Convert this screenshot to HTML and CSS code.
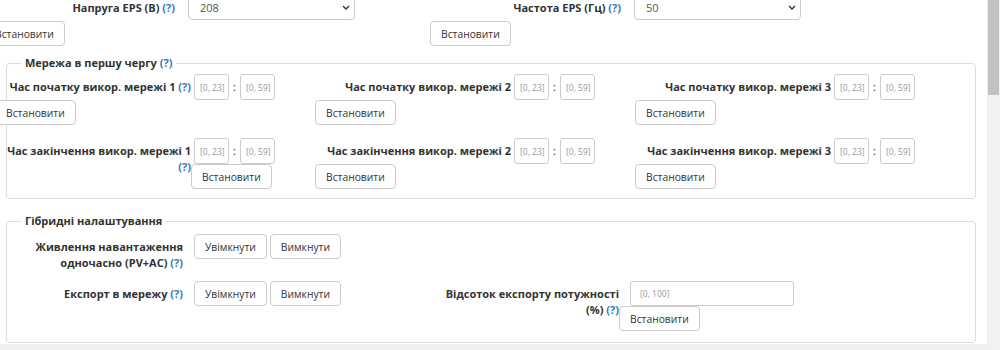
FILE: index.html
```html
<!DOCTYPE html>
<html lang="uk">
<head>
    <meta charset="UTF-8">
    <meta name="viewport" content="width=device-width, initial-scale=1.0">
    <title>Налаштування інвертора</title>
    <link rel="stylesheet" href="styles.css">
</head>
<body>
    <div class="layout">
        <div class="main">
            <div class="panel">
                <!-- EPS settings -->
                <div class="eps-row">
                    <div class="eps-field">
                        <label class="field-label">Напруга EPS (В) <a class="help">(?)</a></label>
                        <div class="select-wrap">
                            <select>
                                <option>208</option>
                                <option>220</option>
                                <option>230</option>
                                <option>240</option>
                            </select>
                            <svg width="8" height="5" viewBox="0 0 8 5"><path d="M1 1l3 3 3-3" fill="none" stroke="#333" stroke-width="1.4"/></svg>
                        </div>
                        <button class="btn btn-below">Встановити</button>
                    </div>
                    <div class="eps-field">
                        <label class="field-label">Частота EPS (Гц) <a class="help">(?)</a></label>
                        <div class="select-wrap">
                            <select>
                                <option>50</option>
                                <option>60</option>
                            </select>
                            <svg width="8" height="5" viewBox="0 0 8 5"><path d="M1 1l3 3 3-3" fill="none" stroke="#333" stroke-width="1.4"/></svg>
                        </div>
                        <button class="btn btn-below">Встановити</button>
                    </div>
                </div>

                <!-- Grid first -->
                <fieldset class="group">
                    <legend>Мережа в першу чергу <a class="help">(?)</a></legend>
                    <div class="time-grid">
                        <div class="time-field">
                            <label class="field-label">Час початку викор. мережі 1 <a class="help">(?)</a></label>
                            <div class="controls">
                                <input type="text" class="time-input" placeholder="[0, 23]">
                                <span class="colon">:</span>
                                <input type="text" class="time-input" placeholder="[0, 59]">
                            </div>
                            <button class="btn btn-below">Встановити</button>
                        </div>
                        <div class="time-field">
                            <label class="field-label">Час початку викор. мережі 2</label>
                            <div class="controls">
                                <input type="text" class="time-input" placeholder="[0, 23]">
                                <span class="colon">:</span>
                                <input type="text" class="time-input" placeholder="[0, 59]">
                            </div>
                            <button class="btn btn-below">Встановити</button>
                        </div>
                        <div class="time-field">
                            <label class="field-label">Час початку викор. мережі 3</label>
                            <div class="controls">
                                <input type="text" class="time-input" placeholder="[0, 23]">
                                <span class="colon">:</span>
                                <input type="text" class="time-input" placeholder="[0, 59]">
                            </div>
                            <button class="btn btn-below">Встановити</button>
                        </div>

                        <div class="time-field">
                            <label class="field-label label-tall">Час закінчення викор. мережі 1<br><a class="help">(?)</a></label>
                            <div class="controls">
                                <input type="text" class="time-input" placeholder="[0, 23]">
                                <span class="colon">:</span>
                                <input type="text" class="time-input" placeholder="[0, 59]">
                            </div>
                            <button class="btn btn-after">Встановити</button>
                        </div>
                        <div class="time-field">
                            <label class="field-label">Час закінчення викор. мережі 2</label>
                            <div class="controls">
                                <input type="text" class="time-input" placeholder="[0, 23]">
                                <span class="colon">:</span>
                                <input type="text" class="time-input" placeholder="[0, 59]">
                            </div>
                            <button class="btn btn-below">Встановити</button>
                        </div>
                        <div class="time-field">
                            <label class="field-label">Час закінчення викор. мережі 3</label>
                            <div class="controls">
                                <input type="text" class="time-input" placeholder="[0, 23]">
                                <span class="colon">:</span>
                                <input type="text" class="time-input" placeholder="[0, 59]">
                            </div>
                            <button class="btn btn-below">Встановити</button>
                        </div>
                    </div>
                </fieldset>

                <!-- Hybrid settings -->
                <fieldset class="group group-hybrid">
                    <legend>Гібридні налаштування</legend>
                    <div class="hybrid-grid">
                        <div class="hybrid-field">
                            <label class="field-label">Живлення навантаження<br>одночасно (PV+AC) <a class="help">(?)</a></label>
                            <div class="controls">
                                <button class="btn">Увімкнути</button>
                                <button class="btn">Вимкнути</button>
                            </div>
                        </div>
                        <div class="hybrid-field export-field">
                            <label class="field-label">Експорт в мережу <a class="help">(?)</a></label>
                            <div class="controls">
                                <button class="btn">Увімкнути</button>
                                <button class="btn">Вимкнути</button>
                            </div>
                        </div>
                        <div class="hybrid-field percent-field">
                            <label class="field-label label-tall">Відсоток експорту потужності<br>(%) <a class="help">(?)</a></label>
                            <div class="controls">
                                <input type="text" class="percent-input" placeholder="[0, 100]">
                            </div>
                            <button class="btn btn-after">Встановити</button>
                        </div>
                    </div>
                </fieldset>
            </div>
        </div>
        <div class="scrollbar">
            <div class="scrollbar-thumb"></div>
        </div>
    </div>
</body>
</html>
```

FILE: styles.css
```css
:root {
    --text-color: #333;
    --link-color: #337ab7;
    --border-color: #ccc;
    --group-border: #dcdcdc;
    --placeholder-color: #999;
    --bg-color: #f0f0f0;
}

* {
    box-sizing: border-box;
}

body {
    margin: 0;
    font-family: 'Open Sans', 'Noto Sans', sans-serif;
    font-size: 11px;
    line-height: 16px;
    color: var(--text-color);
    background-color: var(--bg-color);
    overflow: hidden;
}

.layout {
    display: flex;
    height: 350px;
}

.main {
    flex: 1;
    min-width: 0;
}

.panel {
    background: white;
    height: 344px;
    margin-right: 1px;
    overflow: hidden;
}

.scrollbar {
    width: 12px;
    background: #f1f1f1;
}

.scrollbar-thumb {
    height: 95px;
    margin-right: 1px;
    background: #c1c1c1;
}

.field-label {
    font-weight: bold;
    text-align: right;
    padding-top: 5px;
}

.help {
    color: var(--link-color);
    text-decoration: none;
}

.btn {
    height: 25px;
    padding: 0 10px;
    border: 1px solid var(--border-color);
    border-radius: 4px;
    background: white;
    font-family: inherit;
    font-size: 10.3px;
    color: var(--text-color);
    cursor: pointer;
}

.btn-below {
    grid-column: 1 / -1;
    justify-self: start;
}

.btn-after {
    grid-column: 2;
    justify-self: start;
}

/* EPS row */
.eps-row {
    display: grid;
    grid-template-columns: 446px 446px;
    margin: -5px 0 0 -16px;
}

.eps-field {
    display: grid;
    grid-template-columns: 191px 167px;
    column-gap: 13px;
    row-gap: 1px;
    align-items: start;
}

.select-wrap {
    position: relative;
    height: 25px;
}

.select-wrap select {
    width: 100%;
    height: 25px;
    appearance: none;
    border: 1px solid var(--border-color);
    border-radius: 4px;
    background: white;
    padding: 0 11px;
    font: inherit;
    color: #555;
    outline: none;
}

.select-wrap svg {
    position: absolute;
    right: 5px;
    top: 10px;
    pointer-events: none;
}

/* fieldsets */
.group {
    margin: 9px 11px 0 6px;
    padding: 3px 0 9px;
    border: 1px solid var(--group-border);
    border-radius: 4px;
    min-width: 0;
}

.group legend {
    margin-left: 14px;
    padding: 0 4px;
    font-weight: bold;
}

.group-hybrid {
    margin-top: 14px;
    padding: 5px 0 11px;
}

.time-grid {
    display: grid;
    grid-template-columns: repeat(3, 320px);
    row-gap: 13px;
    margin-left: -12px;
}

.time-field,
.hybrid-field {
    display: grid;
    grid-template-columns: 196px auto;
    justify-content: start;
    align-items: start;
}

.controls {
    display: flex;
    align-items: center;
    margin-left: 3px;
}

.label-tall {
    grid-row: 1 / span 2;
}

.time-input,
.percent-input {
    height: 26px;
    width: 35px;
    padding: 0 0 0 5px;
    border: 1px solid var(--border-color);
    border-radius: 3px;
    font-family: inherit;
    font-size: 8.5px;
    color: #555;
    outline: none;
}

.time-input::placeholder,
.percent-input::placeholder {
    color: var(--placeholder-color);
}

.colon {
    width: 11px;
    text-align: center;
}

.hybrid-grid {
    display: grid;
    grid-template-columns: 436px 436px;
    row-gap: 10px;
    margin-left: -12px;
}

.hybrid-field {
    grid-template-columns: 188px auto;
}

.hybrid-field .controls {
    margin-left: 11px;
    gap: 3px;
}

.export-field {
    grid-column: 1;
    grid-row: 2;
}

.percent-field {
    grid-column: 2;
    grid-row: 2;
}

.percent-input {
    width: 164px;
    height: 25px;
    padding: 0 9px;
}
```
